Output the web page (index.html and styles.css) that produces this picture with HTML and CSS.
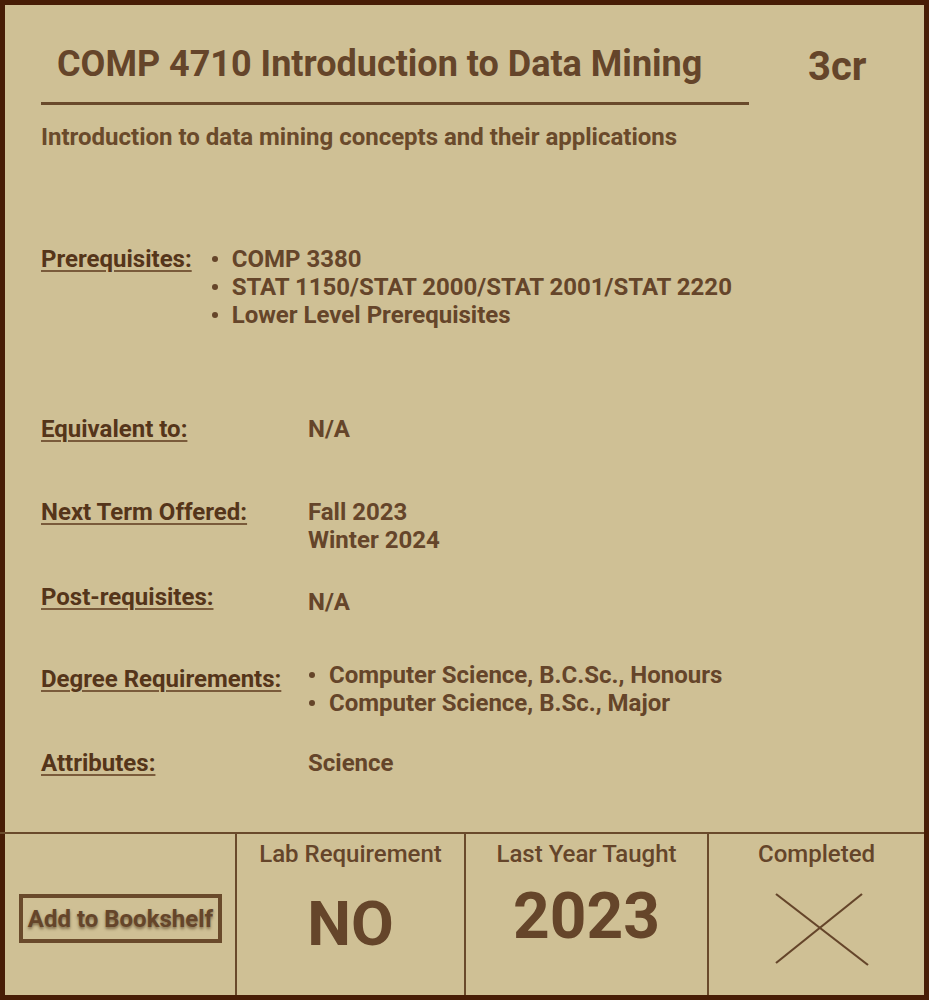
FILE: index.html
```html
<!DOCTYPE html>
<html lang="en">
<head>
<meta charset="utf-8">
<title>COMP 4710</title>
<link rel="stylesheet" href="styles.css">
</head>
<body>
<div class="card">
  <header class="head">
    <div class="title-wrap">
      <h1 class="title">COMP 4710 Introduction to Data Mining</h1>
    </div>
    <div class="credits">3cr</div>
  </header>
  <p class="subtitle">Introduction to data mining concepts and their applications</p>

  <section class="info">
    <div class="row row-prereq">
      <span class="label">Prerequisites:</span>
      <ul class="list">
        <li>COMP 3380</li>
        <li>STAT 1150/STAT 2000/STAT 2001/STAT 2220</li>
        <li>Lower Level Prerequisites</li>
      </ul>
    </div>
    <div class="row row-equiv">
      <span class="label col">Equivalent to:</span>
      <div class="value">N/A</div>
    </div>
    <div class="row row-next">
      <span class="label col">Next Term Offered:</span>
      <div class="value">Fall 2023<br>Winter 2024</div>
    </div>
    <div class="row row-post">
      <span class="label col">Post-requisites:</span>
      <div class="value value-low">N/A</div>
    </div>
    <div class="row row-degree">
      <span class="label col label-low">Degree Requirements:</span>
      <ul class="list">
        <li>Computer Science, B.C.Sc., Honours</li>
        <li>Computer Science, B.Sc., Major</li>
      </ul>
    </div>
    <div class="row row-attr">
      <span class="label col">Attributes:</span>
      <div class="value">Science</div>
    </div>
  </section>

  <footer class="foot">
    <div class="cell cell-btn">
      <button class="shelf">Add to Bookshelf</button>
    </div>
    <div class="cell cell-lab">
      <div class="cell-head">Lab Requirement</div>
      <div class="big big-no">NO</div>
    </div>
    <div class="cell cell-year">
      <div class="cell-head">Last Year Taught</div>
      <div class="big big-year">2023</div>
    </div>
    <div class="cell cell-last">
      <div class="cell-head">Completed</div>
      <svg class="cross" width="96" height="76" viewBox="0 0 96 76" aria-hidden="true">
        <line x1="2" y1="2" x2="94" y2="73" stroke="#65452a" stroke-width="2.2"/>
        <line x1="2" y1="71" x2="88" y2="2" stroke="#65452a" stroke-width="2.2"/>
      </svg>
    </div>
  </footer>
</div>
</body>
</html>
```
FILE: styles.css
```css
html, body {
  margin: 0;
  padding: 0;
}
body {
  font-family: Roboto, "Liberation Sans", sans-serif;
  color: #65452a;
}
.card {
  width: 929px;
  height: 1000px;
  box-sizing: border-box;
  border: 5px solid #481d06;
  background: #cfc095;
  display: flex;
  flex-direction: column;
}
.head {
  display: flex;
  align-items: flex-start;
  padding: 0 0 0 36px;
}
.title-wrap {
  width: 708px;
  border-bottom: 3px solid #6a4a2b;
  padding: 38px 0 17px 16px;
  box-sizing: border-box;
}
.title {
  margin: 0;
  font-size: 36px;
  line-height: 42px;
  font-weight: 700;
  color: #65452a;
}
.credits {
  margin: 38px 0 0 59px;
  font-size: 40px;
  line-height: 48px;
  font-weight: 700;
  color: #65452a;
}
.subtitle {
  margin: 18px 0 0 36px;
  font-size: 24px;
  line-height: 28px;
  font-weight: 700;
  color: #6a4a2b;
}
.info {
  padding-left: 36px;
  font-size: 24px;
  line-height: 28px;
  font-weight: 700;
}
.row {
  display: flex;
  align-items: flex-start;
}
.label {
  color: #55351a;
  text-decoration: underline;
  text-decoration-thickness: 2px;
  text-underline-offset: 3px;
  text-decoration-color: #7a5b3b;
}
.col {
  width: 267px;
  flex: none;
}
.list {
  margin: 0;
  padding: 0;
  list-style: none;
}
.list li {
  position: relative;
  padding-left: 21px;
}
.list li::before {
  content: "";
  position: absolute;
  left: 1px;
  top: 11px;
  width: 6px;
  height: 6px;
  border-radius: 50%;
  background: #65452a;
}
.row-prereq {
  margin-top: 94px;
  gap: 19px;
}
.row-equiv { margin-top: 86px; }
.row-next { margin-top: 55px; }
.row-post { margin-top: 29px; }
.value-low { margin-top: 5px; }
.row-degree { margin-top: 45px; }
.label-low { margin-top: 4px; }
.row-attr { margin-top: 32px; }

.foot {
  margin-top: auto;
  display: flex;
  height: 163px;
  box-sizing: border-box;
  border-top: 2px solid #6a4a2b;
  margin-left: -5px;
  padding-left: 5px;
}
.cell {
  display: flex;
  flex-direction: column;
  align-items: center;
  border-left: 2px solid #6a4a2b;
  box-sizing: border-box;
}
.cell-btn {
  width: 230px;
  border-left: none;
  align-items: flex-start;
  padding: 60px 0 0 14px;
}
.cell-lab { width: 229px; }
.cell-year { width: 243px; }
.cell-last { flex: 1; }
.shelf {
  font-family: Roboto, "Liberation Sans", sans-serif;
  font-size: 24px;
  font-weight: 700;
  color: #65452a;
  background: transparent;
  border: 4px solid #6a4a2b;
  padding: 0;
  height: 49px;
  width: 203px;
  text-shadow: 0 2px 3px rgba(60, 35, 10, 0.55);
}
.cell-head {
  margin-top: 6px;
  font-size: 24px;
  line-height: 28px;
  font-weight: 500;
  color: #65452a;
}
.big {
  font-weight: 700;
  color: #65452a;
  line-height: 1;
}
.big-no {
  font-size: 62px;
  margin-top: 25px;
}
.big-year {
  font-size: 64px;
  margin-top: 17px;
}
.cross {
  margin-top: 24px;
  margin-left: 10px;
}
```
